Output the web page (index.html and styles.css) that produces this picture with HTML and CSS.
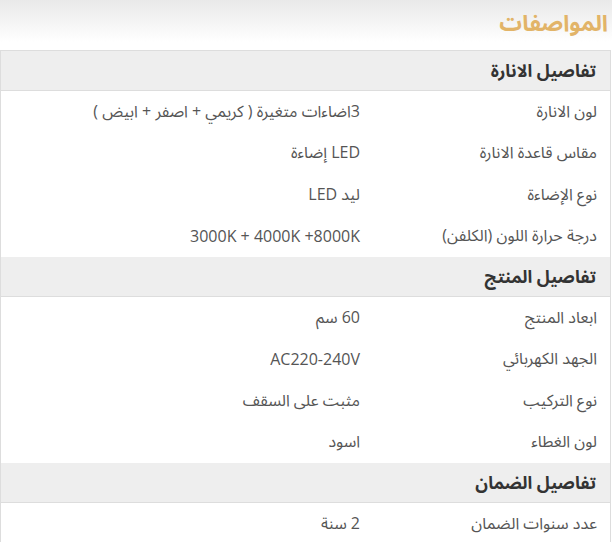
FILE: index.html
```html
<!DOCTYPE html>
<html lang="ar" dir="rtl">
<head>
<meta charset="utf-8">
<link rel="stylesheet" href="styles.css">
</head>
<body>
<div class="page">
  <h2 class="title">المواصفات</h2>
  <div class="specs">
    <div class="group">تفاصيل الانارة</div>
    <div class="row"><div class="k">لون الانارة</div><div class="v">3اضاءات متغيرة ( كريمي + اصفر + ابيض )</div></div>
    <div class="row"><div class="k">مقاس قاعدة الانارة</div><div class="v">LED إضاءة</div></div>
    <div class="row"><div class="k">نوع الإضاءة</div><div class="v">ليد LED</div></div>
    <div class="row"><div class="k">درجة حرارة اللون (الكلفن)</div><div class="v">3000K + 4000K +8000K</div></div>
    <div class="group">تفاصيل المنتج</div>
    <div class="row"><div class="k">ابعاد المنتج</div><div class="v">60 سم</div></div>
    <div class="row"><div class="k">الجهد الكهربائي</div><div class="v">AC220-240V</div></div>
    <div class="row"><div class="k">نوع التركيب</div><div class="v">مثبت على السقف</div></div>
    <div class="row"><div class="k">لون الغطاء</div><div class="v">اسود</div></div>
    <div class="group">تفاصيل الضمان</div>
    <div class="row"><div class="k">عدد سنوات الضمان</div><div class="v">2 سنة</div></div>
  </div>
</div>
</body>
</html>
```
FILE: styles.css
```css
html, body { margin: 0; padding: 0; background: #fff; }
body {
  font-family: "Open Sans", "Noto Sans Arabic", "DejaVu Sans", sans-serif;
  color: #555;
  font-size: 16px;
}
.page {
  background: linear-gradient(to bottom, #e9e9e9 0px, #ffffff 42px, #ffffff 100%);
}
.title {
  margin: 0;
  height: 50px;
  line-height: 46px;
  padding-right: 4px;
  font-size: 22.5px;
  font-weight: bold;
  color: #e2b468;
}
.specs {
  border: 1px solid #ddd;
  border-bottom: none;
  margin-right: 1px;
}
.group {
  background: #eee;
  border-bottom: 1px solid #ddd;
  height: 39px;
  line-height: 39px;
  padding-right: 14px;
  font-weight: bold;
  color: #333;
  font-size: 17.5px;
}
.row {
  display: grid;
  grid-template-columns: 238px 1fr;
  height: 41.5px;
  align-items: center;
  background: #fff;
}
.k { padding-right: 13px; }
.v { padding-right: 12px; }
```
